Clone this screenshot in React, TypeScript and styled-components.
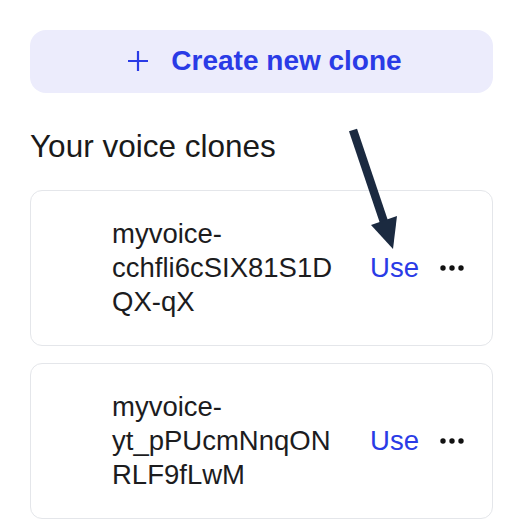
import styled, { createGlobalStyle } from "styled-components";

const GlobalStyle = createGlobalStyle`
  html, body {
    margin: 0;
    padding: 0;
    background: #ffffff;
  }
  body {
    font-family: "Liberation Sans", Arial, sans-serif;
    color: #1c1c1e;
  }
`;

const Page = styled.div`
  position: relative;
  width: 524px;
  height: 532px;
  overflow: hidden;
  padding: 30px 31px 0 30px;
  box-sizing: border-box;
`;

const CreateButton = styled.button`
  display: flex;
  align-items: center;
  justify-content: center;
  gap: 22px;
  width: 100%;
  height: 63px;
  border: none;
  border-radius: 16px;
  background: #ececfc;
  color: #2a3be6;
  font-family: inherit;
  font-size: 28px;
  font-weight: 700;
  padding: 0 0 2px 6px;
  cursor: pointer;
`;

const Heading = styled.h2`
  margin: 35px 0 26px 0;
  font-size: 31.5px;
  line-height: 36px;
  font-weight: 400;
  color: #1a1a1a;
`;

const List = styled.div`
  display: flex;
  flex-direction: column;
  gap: 17px;
`;

const Card = styled.div`
  display: flex;
  align-items: center;
  height: 156px;
  box-sizing: border-box;
  padding: 0 28px 0 81px;
  border: 1px solid #e4e6ea;
  border-radius: 12px;
  background: #fff;
`;

const CloneName = styled.div`
  flex: 1;
  min-width: 0;
  margin-right: 28px;
  font-size: 27.5px;
  line-height: 34px;
  color: #1c1c1e;
  overflow-wrap: anywhere;
`;

const UseLink = styled.a`
  font-size: 27.5px;
  line-height: 34px;
  color: #2a3be6;
  text-decoration: none;
  margin-right: 21px;
  cursor: pointer;
`;

const MoreButton = styled.span`
  display: flex;
  align-items: center;
  width: 24px;
  height: 34px;
  color: #111;
`;

const Arrow = styled.svg`
  position: absolute;
  left: 340px;
  top: 120px;
  pointer-events: none;
`;

const clones = [
  "myvoice-cchfli6cSIX81S1DQX-qX",
  "myvoice-yt_pPUcmNnqONRLF9fLwM",
];

const PlusIcon = () => (
  <svg width="22" height="22" viewBox="0 0 22 22" fill="none">
    <path d="M11 1v20M1 11h20" stroke="currentColor" strokeWidth="2.2" />
  </svg>
);

const Dots = () => (
  <svg width="24" height="6" viewBox="0 0 24 6">
    <circle cx="3" cy="3" r="2.7" fill="currentColor" />
    <circle cx="12" cy="3" r="2.7" fill="currentColor" />
    <circle cx="21" cy="3" r="2.7" fill="currentColor" />
  </svg>
);

const App = () => {
  return (
    <Page>
      <GlobalStyle />
      <CreateButton>
        <PlusIcon />
        Create new clone
      </CreateButton>
      <Heading>Your voice clones</Heading>
      <List>
        {clones.map((name) => (
          <Card key={name}>
            <CloneName>{name}</CloneName>
            <UseLink>Use</UseLink>
            <MoreButton>
              <Dots />
            </MoreButton>
          </Card>
        ))}
      </List>
      {/* annotation arrow pointing at the first Use link */}
      <Arrow width="70" height="140" viewBox="0 0 70 140">
        <path d="M13 10 L44 102" stroke="#1b2a40" strokeWidth="8.5" />
        <path d="M31 105 L57 96 L53 129 Z" fill="#1b2a40" />
      </Arrow>
    </Page>
  );
};

export default App;
